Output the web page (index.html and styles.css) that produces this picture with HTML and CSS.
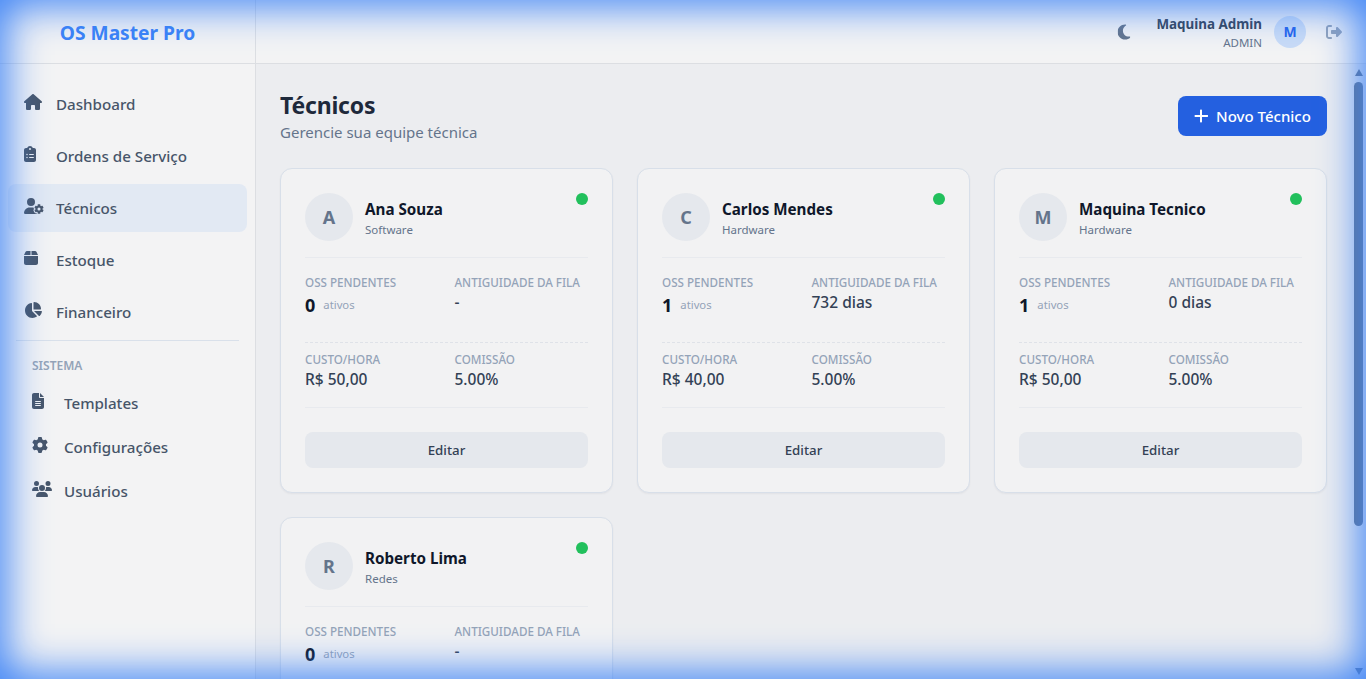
FILE: index.html
```html
<!DOCTYPE html>
<html lang="pt-BR">
<head>
<meta charset="utf-8">
<title>OS Master Pro</title>
<link rel="stylesheet" href="styles.css">
</head>
<body>
<svg class="defs" aria-hidden="true">
  <symbol id="i-home" viewBox="0 0 576 512"><path d="M575.8 255.5c0 18-15 32.1-32 32.1h-32l.7 160.2c0 2.7-.2 5.4-.5 8.1V472c0 22.1-17.9 40-40 40H456c-1.1 0-2.2 0-3.3-.1c-1.4 .1-2.8 .1-4.2 .1H416 392c-22.1 0-40-17.9-40-40V448 384c0-17.7-14.3-32-32-32H256c-17.7 0-32 14.3-32 32v64 24c0 22.1-17.9 40-40 40H160 128.1c-1.5 0-3-.1-4.5-.2c-1.2 .1-2.4 .2-3.6 .2H104c-22.1 0-40-17.9-40-40V360c0-.9 0-1.9 .1-2.8V287.6H32c-18 0-32-14-32-32.1c0-9 3-17 10-24L266.4 8c7-7 15-8 22-8s15 2 21 7L564.8 231.5c8 7 12 15 11 24z"/></symbol>
  <symbol id="i-clip" viewBox="0 0 384 512"><path d="M192 0c-41.8 0-77.4 26.7-90.5 64H64C28.7 64 0 92.7 0 128V448c0 35.3 28.7 64 64 64H320c35.3 0 64-28.7 64-64V128c0-35.3-28.7-64-64-64H282.5C269.4 26.7 233.8 0 192 0zm0 64a32 32 0 1 1 0 64 32 32 0 1 1 0-64zM72 272a24 24 0 1 1 48 0 24 24 0 1 1 -48 0zm104-16H304c8.8 0 16 7.2 16 16s-7.2 16-16 16H176c-8.8 0-16-7.2-16-16s7.2-16 16-16zM72 368a24 24 0 1 1 48 0 24 24 0 1 1 -48 0zm88 0c0-8.8 7.2-16 16-16H304c8.8 0 16 7.2 16 16s-7.2 16-16 16H176c-8.8 0-16-7.2-16-16z"/></symbol>
  <symbol id="i-usercog" viewBox="0 0 640 512"><path d="M224 0a128 128 0 1 1 0 256A128 128 0 1 1 224 0zM178.3 304h91.4c11.8 0 23.4 1.2 34.5 3.3c-2.1 18.5 7.4 35.6 21.8 44.8c-16.6 10.6-26.7 31.6-20 53.3c4 12.9 9.4 25.5 16.4 37.6s15.2 23.1 24.4 33c15.7 16.9 39.6 18.4 57.2 8.7v.9c0 9.2 2.7 18.5 7.9 26.3H29.7C13.3 512 0 498.7 0 482.3C0 383.8 79.8 304 178.3 304zM436 218.2c0-7 4.5-13.3 11.3-14.8c10.5-2.4 21.5-3.7 32.7-3.7s22.2 1.3 32.7 3.7c6.8 1.5 11.3 7.8 11.3 14.8v30.6c7.9 3.4 15.4 7.7 22.3 12.8l24.9-14.3c6.1-3.5 13.7-2.7 18.5 2.4c7.6 8.1 14.3 17.2 20.1 27.2s10.3 20.4 13.5 31c2.1 6.7-1.1 13.7-7.2 17.2l-25 14.4c.4 4 .7 8.1 .7 12.3s-.2 8.2-.7 12.3l25 14.4c6.1 3.5 9.2 10.5 7.2 17.2c-3.3 10.6-7.8 21-13.5 31s-12.5 19.1-20.1 27.2c-4.8 5.1-12.5 5.9-18.5 2.4l-24.9-14.3c-6.9 5.1-14.3 9.4-22.3 12.8l0 30.6c0 7-4.5 13.3-11.3 14.8c-10.5 2.4-21.5 3.7-32.7 3.7s-22.2-1.3-32.7-3.7c-6.8-1.5-11.3-7.8-11.3-14.8V454.8c-8-3.4-15.6-7.7-22.5-12.9l-24.7 14.3c-6.1 3.5-13.7 2.7-18.5-2.4c-7.6-8.1-14.3-17.2-20.1-27.2s-10.3-20.4-13.5-31c-2.1-6.7 1.1-13.7 7.2-17.2l24.8-14.3c-.4-4.1-.7-8.2-.7-12.4s.3-8.3 .7-12.4L343.8 325c-6.1-3.5-9.2-10.5-7.2-17.2c3.3-10.6 7.7-21 13.5-31s12.5-19.1 20.1-27.2c4.8-5.1 12.4-5.9 18.5-2.4l24.8 14.3c6.9-5.1 14.5-9.4 22.5-12.9V218.2zm92.1 133.5a48.1 48.1 0 1 0 -96.1 0 48.1 48.1 0 1 0 96.1 0z"/></symbol>
  <symbol id="i-box" viewBox="0 0 448 512"><path d="M50.7 58.5L0 160H208V32H93.7C75.5 32 58.9 42.3 50.7 58.5zM240 160H448L397.3 58.5C389.1 42.3 372.5 32 354.3 32H240V160zm208 32H0V416c0 35.3 28.7 64 64 64H384c35.3 0 64-28.7 64-64V192z"/></symbol>
  <symbol id="i-pie" viewBox="0 0 576 512"><path d="M304 240V16.6c0-9 7-16.6 16-16.6C443.7 0 544 100.3 544 224c0 9-7.6 16-16.6 16H304zM32 272C32 150.7 122.1 50.3 239 34.3c9.2-1.3 17 6.1 17 15.4V288L412.5 444.5c6.7 6.7 6.2 17.7-1.5 23.1C371.8 495.6 323.8 512 272 512C139.5 512 32 404.6 32 272zm526.4 16c9.3 0 16.6 7.8 15.4 17c-7.7 55.9-34.6 105.6-73.9 142.3c-6 5.6-15.4 5.2-21.2-.7L320 288H558.4z"/></symbol>
  <symbol id="i-file" viewBox="0 0 384 512"><path d="M64 0C28.7 0 0 28.7 0 64V448c0 35.3 28.7 64 64 64H320c35.3 0 64-28.7 64-64V160H256c-17.7 0-32-14.3-32-32V0H64zM256 0V128H384L256 0zM112 256H272c8.8 0 16 7.2 16 16s-7.2 16-16 16H112c-8.8 0-16-7.2-16-16s7.2-16 16-16zm0 64H272c8.8 0 16 7.2 16 16s-7.2 16-16 16H112c-8.8 0-16-7.2-16-16s7.2-16 16-16zm0 64H272c8.8 0 16 7.2 16 16s-7.2 16-16 16H112c-8.8 0-16-7.2-16-16s7.2-16 16-16z"/></symbol>
  <symbol id="i-cog" viewBox="0 0 512 512"><path d="M495.9 166.6c3.2 8.7 .5 18.4-6.4 24.6l-43.3 39.4c1.1 8.3 1.7 16.8 1.7 25.4s-.6 17.1-1.7 25.4l43.3 39.4c6.9 6.2 9.6 15.9 6.4 24.6c-4.4 11.9-9.7 23.3-15.8 34.3l-4.7 8.1c-6.6 11-14 21.4-22.1 31.2c-5.9 7.2-15.7 9.6-24.5 6.8l-55.7-17.7c-13.4 10.3-28.2 18.9-44 25.4l-12.5 57.1c-2 9.1-9 16.3-18.2 17.8c-13.8 2.3-28 3.5-42.5 3.5s-28.7-1.2-42.5-3.5c-9.2-1.5-16.2-8.7-18.2-17.8l-12.5-57.1c-15.8-6.5-30.6-15.1-44-25.4L83.1 425.9c-8.8 2.8-18.6 .3-24.5-6.8c-8.1-9.8-15.5-20.2-22.1-31.2l-4.7-8.1c-6.1-11-11.4-22.4-15.8-34.3c-3.2-8.7-.5-18.4 6.4-24.6l43.3-39.4C64.6 273.1 64 264.6 64 256s.6-17.1 1.7-25.4L22.4 191.2c-6.9-6.2-9.6-15.9-6.4-24.6c4.4-11.9 9.7-23.3 15.8-34.3l4.7-8.1c6.6-11 14-21.4 22.1-31.2c5.9-7.2 15.7-9.6 24.5-6.8l55.7 17.7c13.4-10.3 28.2-18.9 44-25.4l12.5-57.1c2-9.1 9-16.3 18.2-17.8C227.3 1.2 241.5 0 256 0s28.7 1.2 42.5 3.5c9.2 1.5 16.2 8.7 18.2 17.8l12.5 57.1c15.8 6.5 30.6 15.1 44 25.4l55.7-17.7c8.8-2.8 18.6-.3 24.5 6.8c8.1 9.8 15.5 20.2 22.1 31.2l4.7 8.1c6.1 11 11.4 22.4 15.8 34.3zM256 336a80 80 0 1 0 0-160 80 80 0 1 0 0 160z"/></symbol>
  <symbol id="i-users" viewBox="0 0 640 512"><path d="M144 0a80 80 0 1 1 0 160A80 80 0 1 1 144 0zM512 0a80 80 0 1 1 0 160A80 80 0 1 1 512 0zM0 298.7C0 239.8 47.8 192 106.7 192h42.7c15.9 0 31 3.5 44.6 9.7c-1.3 7.2-1.9 14.7-1.9 22.3c0 38.2 16.8 72.5 43.3 96c-.2 0-.4 0-.7 0H21.3C9.6 320 0 310.4 0 298.7zM405.3 320c-.2 0-.4 0-.7 0c26.6-23.5 43.3-57.8 43.3-96c0-7.6-.7-15-1.9-22.3c13.6-6.3 28.7-9.7 44.6-9.7h42.7C592.2 192 640 239.8 640 298.7c0 11.8-9.6 21.3-21.3 21.3H405.3zM224 224a96 96 0 1 1 192 0 96 96 0 1 1 -192 0zM128 485.3C128 411.7 187.7 352 261.3 352H378.7C452.3 352 512 411.7 512 485.3c0 14.7-11.9 26.7-26.7 26.7H154.7c-14.7 0-26.7-11.9-26.7-26.7z"/></symbol>
  <symbol id="i-moon" viewBox="0 0 384 512"><path d="M223.5 32C100 32 0 132.3 0 256S100 480 223.5 480c60.6 0 115.5-24.2 155.8-63.4c5-4.9 6.3-12.5 3.1-18.7s-10.1-9.7-17-8.5c-9.8 1.7-19.8 2.6-30.1 2.6c-96.9 0-175.5-78.8-175.5-176c0-65.8 36-123.1 89.3-153.3c6.1-3.5 9.2-10.5 7.7-17.3s-7.3-11.9-14.3-12.5c-6.3-.5-12.6-.8-19-.8z"/></symbol>
  <symbol id="i-logout" viewBox="0 0 512 512"><path d="M377.9 105.9L500.7 228.7c7.2 7.2 11.3 17.1 11.3 27.3s-4.1 20.1-11.3 27.3L377.9 406.1c-6.4 6.4-15 9.9-24 9.9c-18.7 0-33.9-15.2-33.9-33.9l0-62.1-128 0c-17.7 0-32-14.3-32-32l0-64c0-17.7 14.3-32 32-32l128 0 0-62.1c0-18.7 15.2-33.9 33.9-33.9c9 0 17.6 3.6 24 9.9zM160 96L96 96c-17.7 0-32 14.3-32 32l0 256c0 17.7 14.3 32 32 32l64 0c17.7 0 32 14.3 32 32s-14.3 32-32 32l-64 0c-53 0-96-43-96-96L0 128C0 75 43 32 96 32l64 0c17.7 0 32 14.3 32 32s-14.3 32-32 32z"/></symbol>
  <symbol id="i-plus" viewBox="0 0 448 512"><path d="M256 80c0-17.7-14.3-32-32-32s-32 14.3-32 32V224H48c-17.7 0-32 14.3-32 32s14.3 32 32 32H192V432c0 17.7 14.3 32 32 32s32-14.3 32-32V288H432c17.7 0 32-14.3 32-32s-14.3-32-32-32H256V80z"/></symbol>
</svg>
<div class="app">
  <header class="topbar">
    <div class="brand">OS Master Pro</div>
    <div class="topbar-right">
      <svg class="ico-moon"><use href="#i-moon"/></svg>
      <div class="user">
        <div class="user-name">Maquina Admin</div>
        <div class="user-role">ADMIN</div>
      </div>
      <div class="user-avatar">M</div>
      <svg class="ico-logout"><use href="#i-logout"/></svg>
    </div>
  </header>
  <div class="body">
    <aside class="sidebar">
      <nav class="nav">
        <a class="nav-item"><svg class="ico w18"><use href="#i-home"/></svg><span>Dashboard</span></a>
        <a class="nav-item"><svg class="ico w12"><use href="#i-clip"/></svg><span>Ordens de Serviço</span></a>
        <a class="nav-item active"><svg class="ico w20"><use href="#i-usercog"/></svg><span>Técnicos</span></a>
        <a class="nav-item"><svg class="ico w14"><use href="#i-box"/></svg><span>Estoque</span></a>
        <a class="nav-item"><svg class="ico w18"><use href="#i-pie"/></svg><span>Financeiro</span></a>
      </nav>
      <div class="nav-sep"></div>
      <div class="nav-title">SISTEMA</div>
      <nav class="subnav">
        <a class="sub-item"><svg class="ico w12"><use href="#i-file"/></svg><span>Templates</span></a>
        <a class="sub-item"><svg class="ico w16"><use href="#i-cog"/></svg><span>Configurações</span></a>
        <a class="sub-item"><svg class="ico w20"><use href="#i-users"/></svg><span>Usuários</span></a>
      </nav>
    </aside>
    <main class="main">
      <div class="page-head">
        <div>
          <h1 class="page-title">Técnicos</h1>
          <p class="page-sub">Gerencie sua equipe técnica</p>
        </div>
        <button class="btn-new"><svg class="ico-plus"><use href="#i-plus"/></svg><span>Novo Técnico</span></button>
      </div>
      <div class="grid">
        <article class="card">
          <div class="card-head">
            <div class="avatar">A</div>
            <div class="who"><div class="name">Ana Souza</div><div class="spec">Software</div></div>
            <span class="dot"></span>
          </div>
          <div class="stats">
            <div class="stat-row">
              <div><div class="label">OSS PENDENTES</div><div class="count"><b>0</b><span>ativos</span></div></div>
              <div><div class="label">ANTIGUIDADE DA FILA</div><div class="val">-</div></div>
            </div>
            <div class="stat-row dashed">
              <div><div class="label">CUSTO/HORA</div><div class="val">R$ 50,00</div></div>
              <div><div class="label">COMISSÃO</div><div class="val">5.00%</div></div>
            </div>
          </div>
          <button class="btn-edit">Editar</button>
        </article>
        <article class="card">
          <div class="card-head">
            <div class="avatar">C</div>
            <div class="who"><div class="name">Carlos Mendes</div><div class="spec">Hardware</div></div>
            <span class="dot"></span>
          </div>
          <div class="stats">
            <div class="stat-row">
              <div><div class="label">OSS PENDENTES</div><div class="count"><b>1</b><span>ativos</span></div></div>
              <div><div class="label">ANTIGUIDADE DA FILA</div><div class="val">732 dias</div></div>
            </div>
            <div class="stat-row dashed">
              <div><div class="label">CUSTO/HORA</div><div class="val">R$ 40,00</div></div>
              <div><div class="label">COMISSÃO</div><div class="val">5.00%</div></div>
            </div>
          </div>
          <button class="btn-edit">Editar</button>
        </article>
        <article class="card">
          <div class="card-head">
            <div class="avatar">M</div>
            <div class="who"><div class="name">Maquina Tecnico</div><div class="spec">Hardware</div></div>
            <span class="dot"></span>
          </div>
          <div class="stats">
            <div class="stat-row">
              <div><div class="label">OSS PENDENTES</div><div class="count"><b>1</b><span>ativos</span></div></div>
              <div><div class="label">ANTIGUIDADE DA FILA</div><div class="val">0 dias</div></div>
            </div>
            <div class="stat-row dashed">
              <div><div class="label">CUSTO/HORA</div><div class="val">R$ 50,00</div></div>
              <div><div class="label">COMISSÃO</div><div class="val">5.00%</div></div>
            </div>
          </div>
          <button class="btn-edit">Editar</button>
        </article>
        <article class="card card-cut">
          <div class="card-head">
            <div class="avatar">R</div>
            <div class="who"><div class="name">Roberto Lima</div><div class="spec">Redes</div></div>
            <span class="dot"></span>
          </div>
          <div class="stats">
            <div class="stat-row">
              <div><div class="label">OSS PENDENTES</div><div class="count"><b>0</b><span>ativos</span></div></div>
              <div><div class="label">ANTIGUIDADE DA FILA</div><div class="val">-</div></div>
            </div>
          </div>
        </article>
      </div>
    </main>
    <div class="scrollbar" aria-hidden="true">
      <span class="sb-arrow sb-up"></span>
      <div class="sb-track"><div class="sb-thumb"></div></div>
      <span class="sb-arrow sb-down"></span>
    </div>
  </div>
</div>
<div class="glow"></div>
</body>
</html>
```
FILE: styles.css
```css
* { box-sizing: border-box; }
html, body { margin: 0; height: 100%; overflow: hidden; }
body { font-family: "Noto Sans", "Open Sans", sans-serif; color: #1e293b; background: #ecedf0; }
.defs { display: none; }
.app { display: flex; flex-direction: column; height: 100vh; }

.topbar { display: flex; height: 64px; flex: none; background: #f3f3f4; border-bottom: 1px solid #dcdee2; }
.brand { width: 256px; flex: none; border-right: 1px solid #dcdee2; display: flex; align-items: center; justify-content: center; font-size: 19.2px; font-weight: 700; color: #3b82f6; padding-top: 2px; }
.topbar-right { flex: 1; display: flex; align-items: center; justify-content: flex-end; padding-right: 24px; }
.ico-moon { width: 12px; height: 16px; fill: #64748b; margin-right: 26px; transform: scale(1.08); }
.user { text-align: right; margin-right: 12px; }
.user-name { font-size: 13.4px; line-height: 20px; font-weight: 700; color: #334155; }
.user-role { font-size: 11.5px; line-height: 18px; color: #64748b; margin-bottom: -2px; }
.user-avatar { width: 32px; height: 32px; border-radius: 50%; background: #c9dbf6; color: #2563eb; font-size: 14px; font-weight: 700; display: flex; align-items: center; justify-content: center; margin-right: 20px; }
.ico-logout { width: 16px; height: 16px; fill: #94a3b8; }

.body { flex: 1; display: flex; min-height: 0; }
.sidebar { width: 256px; flex: none; background: #f3f3f4; border-right: 1px solid #dcdee2; padding: 16px 8px 0; }
.nav { display: flex; flex-direction: column; gap: 4px; }
.nav-item, .sub-item { display: flex; align-items: center; color: #475569; font-size: 15.15px; font-weight: 500; border-radius: 8px; }
.nav-item { height: 48px; padding-left: 16px; }
.nav-item.active { background: #e2e9f3; }
.nav-item .ico, .sub-item .ico { margin-right: calc(32px - var(--w)); }
.ico { height: 16px; fill: #475569; flex: none; width: var(--w); position: relative; top: -2px; }
.w12 { --w: 12px; }
.w14 { --w: 14px; }
.w16 { --w: 16px; }
.w18 { --w: 18px; }
.w20 { --w: 20px; }
.nav-sep { height: 1px; background: #d9e0ea; margin: 4px 8px 16px; }
.nav-title { font-size: 12px; line-height: 18px; font-weight: 600; color: #94a3b8; padding-left: 24px; margin-bottom: 8px; }
.subnav { display: flex; flex-direction: column; gap: 4px; }
.sub-item { height: 40px; padding-left: 24px; }

.main { flex: 1; min-width: 0; overflow: hidden; padding: 24px; background: #ecedf0; }
.scrollbar { width: 15px; flex: none; display: flex; flex-direction: column; background: #ecedf0; }
.sb-arrow { flex: none; height: 15px; display: flex; justify-content: center; }
.sb-arrow::before { content: ""; width: 0; height: 0; border-left: 4.5px solid transparent; border-right: 4.5px solid transparent; }
.sb-up::before { margin-top: 5px; border-bottom: 7px solid #64748b; }
.sb-down::before { margin-top: 4px; border-top: 7px solid #64748b; }
.sb-track { flex: 1; padding: 3px; }
.sb-thumb { height: 444px; border-radius: 5px; background: #64748b; }

.page-head { display: flex; align-items: center; justify-content: space-between; height: 56px; margin-bottom: 24px; }
.page-title { margin: 0; font-size: 23px; line-height: 34px; letter-spacing: -.2px; font-weight: 700; color: #1e293b; margin-bottom: -2px; }
.page-sub { margin: 0; font-size: 15px; line-height: 24px; color: #64748b; }
.btn-new { display: flex; align-items: center; justify-content: center; gap: 8px; width: 149px; height: 40px; border: 0; border-radius: 8px; background: #2460e0; color: #fff; font: 500 15px "Noto Sans", sans-serif; }
.ico-plus { width: 14px; height: 16px; fill: #fff; }

.grid { display: grid; grid-template-columns: repeat(3, 1fr); gap: 24px; }
.card { background: #f2f2f3; border: 1px solid #d8dfe9; border-radius: 12px; padding: 24px; box-shadow: 0 1px 2px rgba(15,23,42,.05); }
.card-cut { min-height: 325px; }
.card-head { display: flex; align-items: center; gap: 12px; height: 65px; padding-bottom: 16px; border-bottom: 1px solid #e8eaee; position: relative; }
.avatar { width: 48px; height: 48px; border-radius: 50%; background: #e5e8ed; color: #64748b; font-size: 18px; font-weight: 700; display: flex; align-items: center; justify-content: center; }
.name { font-size: 15.2px; line-height: 24px; font-weight: 700; color: #0f172a; }
.spec { font-size: 11.5px; line-height: 18px; margin-bottom: -2px; color: #64748b; }
.dot { position: absolute; right: 0; top: 0; width: 12px; height: 12px; border-radius: 50%; background: #22c05c; }
.stats { padding: 16px 0; border-bottom: 1px solid #e8eaee; margin-bottom: 24px; }
.card-cut .stats { border-bottom: 0; }
.stat-row { display: grid; grid-template-columns: 1fr 1fr; column-gap: 16px; }
.stat-row.dashed { margin-top: 24px; padding-top: 8px; border-top: 1px dashed #dfe2e8; }
.label { font-size: 11.65px; line-height: 18px; margin-bottom: -2px; font-weight: 500; color: #94a3b8; white-space: nowrap; }
.count { display: flex; align-items: center; height: 28px; padding-top: 1px; gap: 8px; }
.count b { font-size: 18px; font-weight: 700; color: #0f172a; }
.count span { font-size: 11.3px; color: #94a3b8; }
.val { font-size: 15.5px; line-height: 24px; font-weight: 500; color: #334155; }
.btn-edit { display: block; width: 100%; height: 36px; border: 0; border-radius: 8px; background: #e5e8ed; color: #334155; font: 500 13.3px "Noto Sans", sans-serif; }

.glow { position: fixed; inset: 0; pointer-events: none; box-shadow: inset 0 0 40px 6px #3b82f6; }
```
